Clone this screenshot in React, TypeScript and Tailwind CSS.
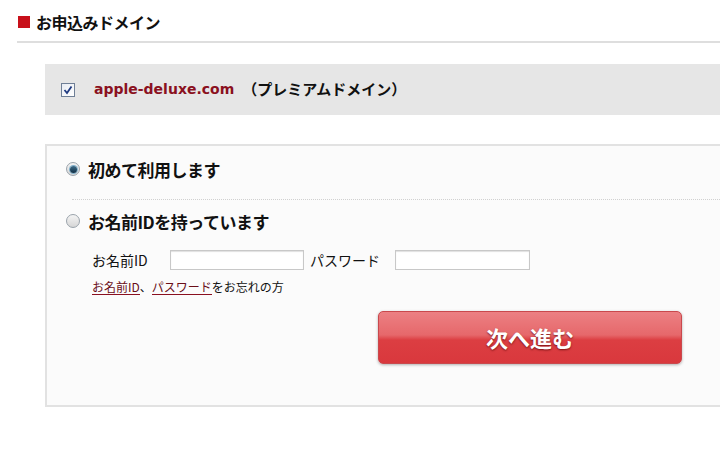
import React from 'react';

const Radio: React.FC<{ checked?: boolean }> = ({ checked = false }) => (
  <span className="flex h-[14px] w-[14px] shrink-0 items-center justify-center rounded-full border border-[#9aa3ab] bg-gradient-to-b from-[#f4f4f4] to-[#d6d6d6]">
    {checked && (
      <span className="h-[7px] w-[7px] rounded-full bg-gradient-to-b from-[#3f6f8c] to-[#0f2f45] shadow-[0_0_0_1px_#7fb0cc]" />
    )}
  </span>
);

export default function App() {
  return (
    <div className="h-[463px] w-[720px] overflow-hidden bg-white font-['Noto_Sans_CJK_JP',sans-serif] text-[#111]">
      {/* header */}
      <div className="flex h-[20px] items-center gap-[6px] pl-[18px] mt-[12px]">
        <span className="h-[12px] w-[12px] bg-[#c8101a]" />
        <span className="text-[16px] font-bold leading-none tracking-[-0.5px]">お申込みドメイン</span>
      </div>
      <div className="ml-[17px] mt-[9px] h-[2px] bg-[#dedede]" />

      {/* selected domain */}
      <div className="ml-[45px] mt-[21px] flex h-[51px] items-center bg-[#e6e6e6] pl-[16px]">
        <span className="flex h-[14px] w-[14px] items-center justify-center border border-[#6f7f96] bg-gradient-to-br from-[#e8ecf3] to-[#ffffff]">
          <svg width="10" height="10" viewBox="0 0 10 10">
            <path d="M1.5 5 L4 8 L8.5 1.5" fill="none" stroke="#1f3a80" strokeWidth="1.8" />
          </svg>
        </span>
        <span className="ml-[19px] font-['DejaVu_Sans',sans-serif] text-[14px] font-bold text-[#8a1020]">
          apple-deluxe.com
        </span>
        <span className="ml-[8px] text-[15px] font-bold">（プレミアムドメイン）</span>
      </div>

      {/* options box */}
      <div className="ml-[45px] mt-[29px] h-[263px] border-y-2 border-l-2 border-[#e2e2e2] bg-[#fbfbfb]">
        <div className="mt-[13px] flex h-[20px] items-center pl-[19px]">
          <Radio checked />
          <span className="ml-[8px] text-[17px] font-bold leading-none tracking-[-0.5px]">初めて利用します</span>
        </div>
        <div className="ml-[25px] mt-[20px] border-t border-dotted border-[#d0d0d0]" />
        <div className="mt-[11px] flex h-[20px] items-center pl-[19px]">
          <Radio />
          <span className="ml-[8px] text-[17px] font-bold leading-none tracking-[-0.5px]">お名前IDを持っています</span>
        </div>

        <div className="mt-[19px] flex h-[20px] items-center pl-[45px] text-[14px]">
          <span className="w-[78px]">お名前ID</span>
          <input className="h-[20px] w-[134px] border border-[#c8c8c8] bg-white shadow-[inset_0_1px_1px_#e0e0e0] outline-none" />
          <span className="ml-[6px] w-[85px]">パスワード</span>
          <input className="h-[20px] w-[135px] border border-[#c8c8c8] bg-white shadow-[inset_0_1px_1px_#e0e0e0] outline-none" />
        </div>

        <div className="mt-[9px] flex h-[16px] items-center pl-[45px] text-[12px]">
          <span className="border-b border-[#8a1020] leading-[14px] text-[#6a0e18]">お名前ID</span>
          <span>、</span>
          <span className="border-b border-[#8a1020] leading-[14px] text-[#6a0e18]">パスワード</span>
          <span>をお忘れの方</span>
        </div>

        <button className="ml-[331px] mt-[16px] flex h-[53px] w-[304px] items-center justify-center rounded-[5px] border border-[#c9494d] bg-[linear-gradient(to_bottom,#ec8083_0%,#e6686b_45%,#dc3e42_55%,#d9383d_100%)] shadow-[0_1px_3px_rgba(0,0,0,0.3)]">
          <span className="text-[22px] font-bold text-white [text-shadow:0_1px_2px_rgba(80,0,0,0.7)]">次へ進む</span>
        </button>
      </div>
    </div>
  );
}
